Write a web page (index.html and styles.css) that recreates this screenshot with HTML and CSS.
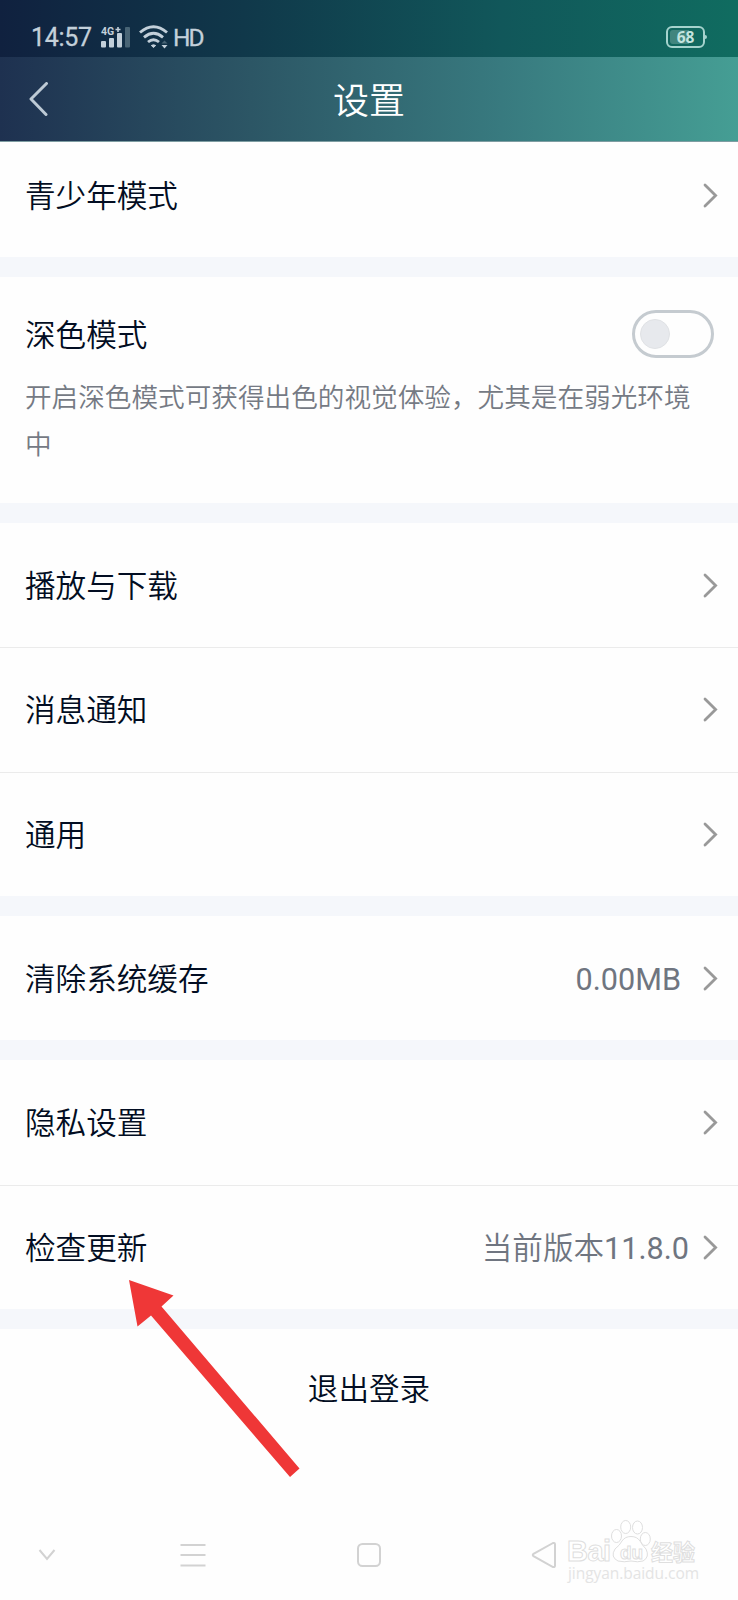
FILE: index.html
```html
<!DOCTYPE html>
<html lang="zh-CN">
<head>
  <meta charset="UTF-8">
  <meta name="viewport" content="width=device-width, initial-scale=1.0">
  <title>设置</title>
  <link rel="stylesheet" href="styles.css">
</head>
<body>
  <!-- Shared icons -->
  <svg class="sprite" width="0" height="0">
    <symbol id="chevron" viewBox="0 0 15 25">
      <path d="M2 2 L12.6 12.5 L2 23" fill="none" stroke="#999" stroke-width="2.8" stroke-linecap="round"/>
    </symbol>
  </svg>

  <div class="top">
    <!-- Status bar -->
    <div class="status-bar">
      <span class="time">14:57</span>
      <svg class="signal" width="30" height="22" viewBox="0 0 30 22">
        <text class="network" x="0" y="9">4G</text>
        <path d="M14.500 3.500 h5 M17 1 v5" stroke="#c3d0da" stroke-width="1.600"/>
        <rect x="0" y="15" width="5" height="6.500" rx="1" fill="#c3d0da"/>
        <rect x="8" y="12" width="5" height="9.500" rx="1" fill="#c3d0da"/>
        <rect x="16" y="7" width="5" height="14.500" rx="1" fill="#c3d0da"/>
        <rect x="24" y="1" width="5" height="20.500" rx="1" fill="#486475"/>
      </svg>
      <svg class="wifi" width="30" height="24" viewBox="0 0 30 24">
        <g fill="none" stroke="#c3d0da" stroke-width="2.900">
          <path d="M1 7.500 Q14.500 -4 28 7.500"/>
          <path d="M5 12.300 Q14.500 4.300 24 12.300"/>
          <path d="M9 17 Q14.500 12.500 20 17"/>
        </g>
        <path d="M12.300 20.500 Q14.500 19 16.700 20.500 L14.500 22.500 Z" fill="#c3d0da" stroke="#c3d0da"/>
        <path d="M22.500 18.500 h6 L25.500 15.500 Z" fill="#486475"/>
        <path d="M22.500 20 h6 L25.500 23.500 Z" fill="#c3d0da"/>
      </svg>
      <span class="hd">HD</span>
      <div class="battery"><span class="level">68</span></div>
    </div>

    <!-- Title bar -->
    <div class="title-bar">
      <svg class="back" width="20" height="34" viewBox="0 0 20 34">
        <path d="M17.500 1.500 L2 17 L17 32.500" fill="none" stroke="#bdcad5" stroke-width="3" stroke-linecap="round" stroke-linejoin="round"/>
      </svg>
      <h1>设置</h1>
    </div>
  </div>

  <div class="settings">
    <div class="group">
      <div class="row first">
        <span class="label">青少年模式</span>
        <svg class="arrow"><use href="#chevron"/></svg>
      </div>
    </div>

    <div class="group dark-mode">
      <div class="dark-head">
        <span class="label">深色模式</span>
        <div class="toggle"><div class="knob"></div></div>
      </div>
      <p class="desc">开启深色模式可获得出色的视觉体验，尤其是在弱光环境中</p>
    </div>

    <div class="group">
      <div class="row">
        <span class="label">播放与下载</span>
        <svg class="arrow"><use href="#chevron"/></svg>
      </div>
      <div class="row">
        <span class="label">消息通知</span>
        <svg class="arrow"><use href="#chevron"/></svg>
      </div>
      <div class="row">
        <span class="label">通用</span>
        <svg class="arrow"><use href="#chevron"/></svg>
      </div>
    </div>

    <div class="group">
      <div class="row">
        <span class="label">清除系统缓存</span>
        <span class="value cache">0.00MB</span>
        <svg class="arrow"><use href="#chevron"/></svg>
      </div>
    </div>

    <div class="group">
      <div class="row">
        <span class="label">隐私设置</span>
        <svg class="arrow"><use href="#chevron"/></svg>
      </div>
      <div class="row">
        <span class="label">检查更新</span>
        <span class="value">当前版本<span class="version">11.8.0</span></span>
        <svg class="arrow"><use href="#chevron"/></svg>
      </div>
    </div>

    <div class="logout">退出登录</div>
  </div>

  <!-- System navigation -->
  <div class="nav-bar">
    <svg width="18" height="12" viewBox="0 0 18 12">
      <path d="M1.500 1 L9 10 L16.500 1" fill="none" stroke="#d2d2d2" stroke-width="2"/>
    </svg>
    <svg class="nav-menu" width="26" height="24" viewBox="0 0 26 24">
      <path d="M0.500 2 H25.500 M0.500 12 H25.500 M0.500 22.500 H25.500" stroke="#d2d2d2" stroke-width="2"/>
    </svg>
    <svg class="nav-home" width="26" height="26" viewBox="0 0 26 26">
      <rect x="2" y="2" width="22" height="22" rx="4.500" fill="none" stroke="#d2d2d2" stroke-width="2"/>
    </svg>
    <svg class="nav-back" width="26" height="28" viewBox="0 0 26 28">
      <path d="M22 2 L2.500 12.800 Q1 14 2.500 15.200 L22 26 Q24 26.500 24 24.500 V3.500 Q24 1.500 22 2 Z" fill="none" stroke="#d2d2d2" stroke-width="2"/>
    </svg>
  </div>

  <!-- Pointer to the update row -->
  <svg class="pointer" width="172" height="198" viewBox="0 0 172 198">
    <path d="M0 0 L44.500 15.500 L32.500 26.500 L170.500 188.500 L161 197 L22 35.500 L8.500 46.500 Z" fill="#ef3737"/>
  </svg>

  <!-- Watermark -->
  <svg class="watermark" width="138" height="66" viewBox="0 0 138 66">
    <g fill="#fff" stroke="#dfdfdf" stroke-width="1">
      <text class="wm-logo" x="1" y="42" textLength="44">Bai</text>
      <ellipse cx="50.500" cy="17" rx="5" ry="6.500"/>
      <ellipse cx="59.700" cy="8" rx="5" ry="6.500"/>
      <ellipse cx="71.500" cy="8.500" rx="5" ry="6.500"/>
      <ellipse cx="79.300" cy="20" rx="5" ry="6.500"/>
      <path d="M56 22 Q59 17.500 65 17.500 Q71 17.500 74 22 Q76 26 80 30 Q84 38 77 42 Q72 43.500 65 42 Q58 43.500 52 42 Q44 38 49 30 Q54 26 56 22 Z"/>
      <text class="wm-du" x="54" y="39.500">du</text>
      <text class="wm-cn" x="85" y="41">经验</text>
    </g>
    <text class="wm-url" x="2" y="60" textLength="131">jingyan.baidu.com</text>
  </svg>
</body>
</html>
```
FILE: styles.css
```css
/* General Styles */
body {
  position: relative;
  margin: 0;
  height: 1600px;
  overflow: hidden;
  display: flex;
  flex-direction: column;
  font-family: Roboto, "Noto Sans CJK SC", sans-serif;
  font-size: 30.6px;
  color: #020d22;
  background-color: #fefefe;
}

.sprite {
  position: absolute;
}

/* Status bar */
.status-bar {
  height: 57px;
  padding: 18px 30px 0 31px;
  box-sizing: border-box;
  display: flex;
  align-items: center;
  color: #c3d0da;
  background: linear-gradient(to right, #10213f, #10384a 33%, #11575a 68%, #106c60);
}

.time {
  width: 70px;
  font-size: 25px;
  letter-spacing: -0.3px;
  -webkit-text-stroke: 0.3px #c3d0da;
}

.signal {
  margin-top: -2px;
}

.network {
  font-family: Roboto, sans-serif;
  font-size: 10.5px;
  font-weight: 700;
  fill: #c3d0da;
}

.wifi {
  margin-left: 8px;
  margin-top: -1px;
}

.hd {
  margin-left: 4px;
  font-size: 24.5px;
  letter-spacing: -2px;
  -webkit-text-stroke: 0.3px #c3d0da;
}

.battery {
  position: relative;
  width: 39px;
  height: 22px;
  box-sizing: border-box;
  margin-left: auto;
  margin-right: 3px;
  margin-top: -1px;
  padding: 2px;
  border: 2px solid #a5d3cd;
  border-radius: 6px;
}

.battery::after {
  content: "";
  position: absolute;
  right: -4px;
  top: 7px;
  width: 2px;
  height: 4px;
  background: #a5d3cd;
  border-radius: 0 2px 2px 0;
}

.level {
  display: block;
  height: 14px;
  line-height: 14px;
  text-align: center;
  font-family: "Open Sans", sans-serif;
  font-size: 15.5px;
  font-weight: 700;
  color: #c4e4df;
  background: linear-gradient(to right, #41857e 60%, transparent 60%);
  border-radius: 3px;
}

/* Title bar */
.title-bar {
  height: 85px;
  padding: 0 29px;
  box-sizing: border-box;
  display: flex;
  align-items: center;
  border-bottom: 1px solid #7e9da2;
  background: linear-gradient(to right, #1e3150, #2c5665 34%, #387a7f 68%, #459e94);
}

h1 {
  flex: 1;
  margin: 0 20px 3px 0;
  text-align: center;
  font-size: 36px;
  font-weight: 350;
  color: #fff;
}

/* Settings list */
.group {
  border-bottom: 20px solid #f5f7fb;
}

.row {
  height: 124.33px;
  padding: 0 20px 0 25px;
  box-sizing: border-box;
  display: flex;
  align-items: center;
}

.row + .row {
  border-top: 1px solid #ebebeb;
}

.row.first {
  height: 115px;
  padding-bottom: 8px;
}

.label {
  flex: 1;
  padding-bottom: 3px;
  font-weight: 350;
}

.value {
  margin-right: 14px;
  padding-bottom: 3px;
  color: #6f7580;
  font-weight: 350;
}

.value.cache {
  margin-right: 22px;
  padding: 2px 0 0;
  font-weight: 400;
}

.version {
  font-weight: 400;
}

.arrow {
  width: 15px;
  height: 25px;
}

.dark-mode {
  height: 193px;
  padding: 33px 24px 0 25px;
}

.dark-head {
  height: 48px;
  display: flex;
  align-items: center;
}

.toggle {
  width: 82px;
  height: 48px;
  padding-left: 5px;
  box-sizing: border-box;
  display: flex;
  align-items: center;
  border: 3px solid #c5cbd0;
  border-radius: 24px;
}

.knob {
  width: 30px;
  height: 30px;
  box-sizing: border-box;
  border: 1px solid #e0e2e5;
  border-radius: 50%;
  background: #e7e9ed;
}

.desc {
  margin: 17px 0 0;
  font-size: 26.64px;
  font-weight: 350;
  line-height: 47px;
  color: #757a84;
}

.logout {
  padding-top: 36px;
  text-align: center;
  font-weight: 350;
}

/* System navigation */
.nav-bar {
  margin-top: auto;
  height: 90px;
  padding-left: 38px;
  display: flex;
  align-items: center;
}

.nav-menu {
  margin-left: 124px;
}

.nav-home {
  margin-left: 150px;
}

.nav-back {
  margin-left: 149px;
}

/* Overlays */
.pointer {
  position: absolute;
  left: 129px;
  top: 1280px;
}

.watermark {
  position: absolute;
  left: 566px;
  top: 1519px;
}

.wm-logo {
  font: 700 29px Arial, "Liberation Sans", sans-serif;
}

.wm-du {
  font: 700 19px "Liberation Sans", sans-serif;
}

.wm-cn {
  font: 700 22px "Noto Sans CJK SC", sans-serif;
}

.wm-url {
  font: 15.5px "Open Sans", sans-serif;
  fill: #e4e4e4;
}
```
